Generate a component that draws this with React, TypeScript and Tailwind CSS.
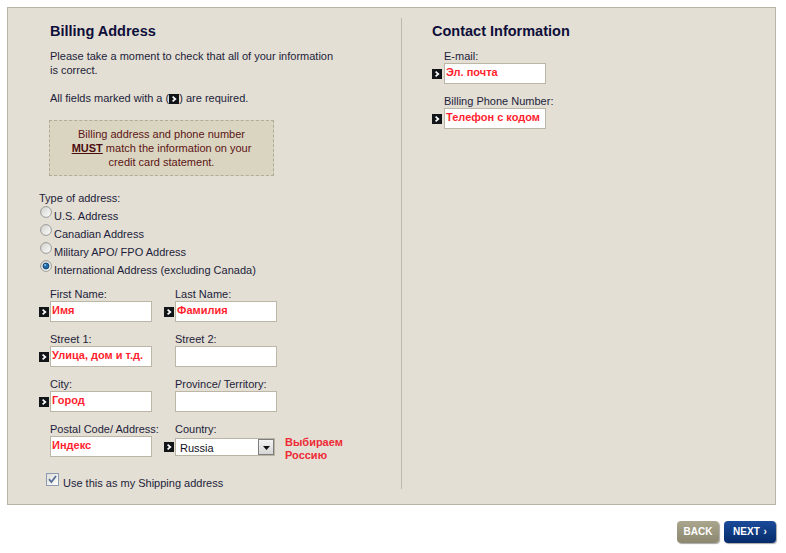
import React from "react";

// small black "required" marker
function Req() {
  return (
    <svg width="10" height="10" viewBox="0 0 10 10" className="block">
      <rect width="10" height="10" fill="#121518" />
      <path d="M3.6 2.7 L6.3 5 L3.6 7.3" stroke="#fff" strokeWidth="1.7" fill="none" />
    </svg>
  );
}

function Radio({ checked }: { checked?: boolean }) {
  return (
    <svg width="12" height="12" viewBox="0 0 12 12" className="block shrink-0">
      <defs>
        <linearGradient id={checked ? "rg1" : "rg0"} x1="0" y1="0" x2="1" y2="1">
          <stop offset="0" stopColor="#cfcfcb" />
          <stop offset="1" stopColor="#ffffff" />
        </linearGradient>
      </defs>
      <circle cx="6" cy="6" r="5.4" fill={`url(#${checked ? "rg1" : "rg0"})`} stroke="#929290" strokeWidth="0.9" />
      {checked && (
        <>
          <circle cx="6" cy="6" r="3" fill="#1d6aa8" stroke="#0e3b66" strokeWidth="0.8" />
          <circle cx="5.2" cy="5.1" r="1" fill="#8fc3ee" />
        </>
      )}
    </svg>
  );
}

function Field({
  label,
  value,
  required,
  slot = 11,
}: {
  label: string;
  value?: string;
  required?: boolean;
  slot?: number;
}) {
  return (
    <div className="w-[125px]">
      <div className={slot === 12 ? "pl-[12px]" : "pl-[11px]"}>{label}</div>
      <div className="flex items-center h-[21px]">
        <div className={slot === 12 ? "w-[12px] shrink-0" : "w-[11px] shrink-0"}>{required && <Req />}</div>
        <div className="w-[102px] h-[21px] shrink-0 bg-white border border-[#bbb6a6] pl-[1px] pt-[1px] text-[#ff1f2f] font-bold whitespace-nowrap overflow-hidden">
          {value}
        </div>
      </div>
    </div>
  );
}

export default function App() {
  const radios = [
    { label: "U.S. Address", checked: false },
    { label: "Canadian Address", checked: false },
    { label: "Military APO/ FPO Address", checked: false },
    { label: "International Address (excluding Canada)", checked: true },
  ];

  return (
    <div className="w-[786px] h-[553px] bg-white overflow-hidden font-['Liberation_Sans',Arial,sans-serif] text-[11px] leading-[14px] text-[#1d1d3b]">
      <div className="mt-[7px] ml-[7px] w-[769px] h-[498px] border border-[#b8b4a6] bg-[#e3dfd4] flex">
        {/* billing column */}
        <div className="w-[393px] shrink-0 pl-[31px] pt-[14px]">
          <div className="pl-[11px]">
            <h2 className="text-[14.5px] leading-[18px] font-bold text-[#0e0e3a]">Billing Address</h2>
            <p className="mt-[9px]">
              Please take a moment to check that all of your information
              <br />
              is correct.
            </p>
            <p className="mt-[14px]">
              All fields marked with a (
              <span className="inline-block align-[-2px]">
                <Req />
              </span>
              ) are required.
            </p>
          </div>

          <div className="ml-[10px] mt-[15px] w-[225px] h-[56px] border border-dashed border-[#b1ac98] bg-[#dad5c1] pt-[6px] text-center text-[#5c1414]">
            Billing address and phone number
            <br />
            <span className="font-bold underline text-[#4a0d0d]">MUST</span> match the information on your
            <br />
            credit card statement.
          </div>

          <div className="mt-[15px]">Type of address:</div>
          <div className="mt-[1px]">
            {radios.map((r) => (
              <div key={r.label} className="flex items-start h-[18px] leading-[18px]">
                <div className="ml-[1px] mr-[2px]">
                  <Radio checked={r.checked} />
                </div>
                <span className="mt-[1px]">{r.label}</span>
              </div>
            ))}
          </div>

          <div className="mt-[9px] flex flex-col gap-[10px]">
            <div className="flex">
              <Field label="First Name:" value="Имя" required />
              <Field label="Last Name:" value="Фамилия" required />
            </div>
            <div className="flex">
              <Field label="Street 1:" value="Улица, дом и т.д." required />
              <Field label="Street 2:" />
            </div>
            <div className="flex">
              <Field label="City:" value="Город" required />
              <Field label="Province/ Territory:" />
            </div>
            <div className="flex">
              <Field label="Postal Code/ Address:" value="Индекс" />
              <div>
                <div className="pl-[11px]">Country:</div>
                <div className="flex h-[21px]">
                  <div className="flex items-center">
                    <div className="w-[11px]">
                      <Req />
                    </div>
                    <div className="w-[100px] h-[18px] bg-white border border-[#b9b4a4] flex items-stretch">
                      <span className="flex-1 pl-[4px] pt-[1px] leading-[16px] text-[#111122]">Russia</span>
                      <div className="w-[16px] border border-[#7d7d7d] bg-linear-to-b from-[#f4f4f4] to-[#d6d6d6] flex items-center justify-center">
                        <svg width="7" height="4" viewBox="0 0 7 4" className="mt-[2px]">
                          <path d="M0 0 H7 L3.5 4 Z" fill="#111" />
                        </svg>
                      </div>
                    </div>
                  </div>
                  <div className="ml-[10px] self-start leading-[13px] font-bold text-[#ee2a35] whitespace-nowrap">
                    Выбираем
                    <br />
                    Россию
                  </div>
                </div>
              </div>
            </div>
          </div>

          <div className="mt-[16px] flex items-start">
            <svg width="13" height="13" viewBox="0 0 13 13" className="ml-[7px] block shrink-0">
              <defs>
                <linearGradient id="cb" x1="0" y1="0" x2="1" y2="1">
                  <stop offset="0" stopColor="#dcdcd8" />
                  <stop offset="1" stopColor="#ffffff" />
                </linearGradient>
              </defs>
              <rect x="0.5" y="0.5" width="12" height="12" fill="url(#cb)" stroke="#8f9bb0" />
              <path d="M3 6.2 L5.4 9 L10 3" stroke="#5a6f98" strokeWidth="1.8" fill="none" />
            </svg>
            <span className="ml-[4px] mt-[3px]">Use this as my Shipping address</span>
          </div>
        </div>

        <div className="w-px mt-[10px] h-[471px] bg-[#bcb8ab] shrink-0" />

        {/* contact column */}
        <div className="pl-[30px] pt-[14px]">
          <h2 className="text-[14.5px] leading-[18px] font-bold text-[#0e0e3a]">Contact Information</h2>
          <div className="mt-[9px] flex flex-col gap-[10px]">
            <Field label="E-mail:" value="Эл. почта" required slot={12} />
            <Field label="Billing Phone Number:" value="Телефон с кодом" required slot={12} />
          </div>
        </div>
      </div>

      <div className="w-[776px] mt-[16px] flex justify-end gap-[5px]">
        <button className="w-[42px] h-[22px] rounded-[4px] bg-linear-to-b from-[#aaa68f] to-[#8c886f] text-white font-bold text-[10px] leading-[22px] shadow-[1px_1px_1px_rgba(0,0,0,0.35)]">
          BACK
        </button>
        <button className="w-[52px] h-[22px] rounded-[4px] bg-linear-to-b from-[#1b4b9a] to-[#052b6a] text-white font-bold text-[10px] leading-[22px] shadow-[1px_1px_1px_rgba(0,0,0,0.35)]">
          NEXT <span className="ml-[1px]">›</span>
        </button>
      </div>
    </div>
  );
}
